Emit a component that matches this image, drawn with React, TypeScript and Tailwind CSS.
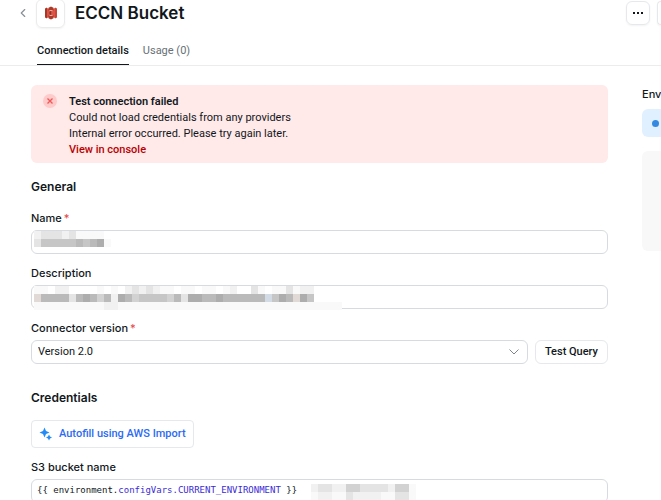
import { useState } from 'react'
import { ChevronLeft } from 'lucide-react'

type Tab = 'details' | 'usage'

interface RedactedProps {
  rows: string[]
  className?: string
}

const SHADES: Record<string, string> = {
  '0': 'bg-transparent',
  '1': 'bg-[#f9f9f9]',
  '2': 'bg-[#f1f1f1]',
  '3': 'bg-[#e4e4e4]',
  '4': 'bg-[#d2d2d2]',
  '5': 'bg-[#c6c6c6]',
  '6': 'bg-[#bababa]',
  '7': 'bg-[#adadad]',
  p: 'bg-[#e0d9d5]',
  b: 'bg-[#d3dce6]',
}

// Private values are covered by a mosaic, one character per cell
function Redacted({ rows, className = '' }: RedactedProps) {
  return (
    <div aria-hidden="true" className={`pointer-events-none absolute ${className}`}>
      {rows.map((row, y) => (
        <div key={y} className="flex">
          {row.split('').map((shade, x) => (
            <span key={x} className={`h-2 w-[7px] ${SHADES[shade]}`} />
          ))}
        </div>
      ))}
    </div>
  )
}

function BucketLogo() {
  return (
    <svg className="h-[14px] w-[14px]" viewBox="0 0 14 14" aria-hidden="true">
      <path d="M1 2.5 3 1.5v11L1 11.5z" fill="#a33a29" />
      <path d="M3 2 5.5 3v8L3 12z" fill="#e05243" />
      <path d="M13 2.5 11 1.5v11l2-1z" fill="#c94636" />
      <path d="M11 2 8.5 3v8l2.5 1z" fill="#e05243" />
      <path d="M7 .5 4.5 1.7v3L7 4l2.5.7v-3z" fill="#a83a29" />
      <path d="M7 13.5l-2.5-1.2v-3L7 10l2.5-.7v3z" fill="#a83a29" />
      <path d="M5 4.5h4v5H5z" fill="#e8705f" />
      <path d="M7 5 5.3 5.5v3L7 9z" fill="#8c3123" />
      <path d="M7 5l1.7.5v3L7 9z" fill="#d04a3a" />
    </svg>
  )
}

function Sparkles() {
  return (
    <svg className="h-[14px] w-[14px]" viewBox="0 0 14 14" fill="#228bf6" aria-hidden="true">
      <path d="M5.5.5 7 4 10.5 5.5 7 7 5.5 10.5 4 7 .5 5.5 4 4z" />
      <path d="M10 7.5l1 2 2 1-2 1-1 2-1-2-2-1 2-1z" />
    </svg>
  )
}

function Required() {
  return <span className="ml-0.5 text-[#e5484d]">*</span>
}

export default function App() {
  const [tab, setTab] = useState<Tab>('details')

  return (
    <div className="overflow-hidden bg-white font-['Inter',sans-serif] text-[11px] leading-4 text-[#11181c]">
      <header className="border-b border-[#ececec]">
        <div className="flex h-[26px] items-center pl-4">
          <button type="button" aria-label="Back" className="text-[#889096]">
            <ChevronLeft className="h-[14px] w-[14px]" />
          </button>
          <div className="ml-1.5 flex h-[29px] w-[29px] shrink-0 items-center justify-center rounded-md border border-[#ebebeb] shadow-xs">
            <BucketLogo />
          </div>
          <h1 className="ml-2.5 text-[17px] leading-6 font-semibold">ECCN Bucket</h1>
          <button
            type="button"
            aria-label="More"
            className="ml-auto flex h-6 w-6 shrink-0 items-center justify-center gap-0.5 rounded-md border border-[#e6e8eb] shadow-xs"
          >
            <span className="h-0.5 w-0.5 bg-[#11181c]" />
            <span className="h-0.5 w-0.5 bg-[#11181c]" />
            <span className="h-0.5 w-0.5 bg-[#11181c]" />
          </button>
          <button
            type="button"
            aria-label="Save"
            className="ml-[7px] h-6 w-1 shrink-0 rounded-l-md border border-r-0 border-[#e6e8eb] shadow-xs"
          />
        </div>
        <nav className="mt-3.5 flex gap-3.5 pl-[37px] font-['Roboto',sans-serif]">
          <button
            type="button"
            onClick={() => setTab('details')}
            className={`h-[25px] border-b pb-0.5 font-medium ${tab === 'details' ? 'border-[#11181c]' : 'border-transparent text-[#687076]'}`}
          >
            Connection details
          </button>
          <button
            type="button"
            onClick={() => setTab('usage')}
            className={`h-[25px] border-b pb-0.5 ${tab === 'usage' ? 'border-[#11181c]' : 'border-transparent text-[#687076]'}`}
          >
            Usage (0)
          </button>
        </nav>
      </header>

      <div className="flex gap-[34px] pl-[31px]">
        <main className="min-w-0 flex-1 pt-[19px]">
          <div
            role="alert"
            className="flex gap-3 rounded-md bg-[#ffe9e9] px-3 pt-[9px] pb-[5px] font-['Roboto',sans-serif]"
          >
            <span className="flex h-[14px] w-[14px] shrink-0 items-center justify-center rounded-full bg-[#ffcaca]">
              <svg className="h-1.5 w-1.5" viewBox="0 0 6 6" stroke="#ee5a5a" strokeWidth="1.4" aria-hidden="true">
                <path d="M.5.5l5 5M5.5.5l-5 5" />
              </svg>
            </span>
            <div>
              <p className="font-semibold">Test connection failed</p>
              <p>Could not load credentials from any providers</p>
              <p>Internal error occurred. Please try again later.</p>
              <a href="#console" className="font-medium text-[#b80000]">View in console</a>
            </div>
          </div>

          <h2 className="mt-4 text-xs leading-4 font-semibold">General</h2>

          <label htmlFor="name" className="mt-[15px] block font-medium">
            Name<Required />
          </label>
          <div className="relative mt-1">
            <input id="name" className="block h-6 w-full rounded-md border border-[#d7dbdf] px-1.5" />
            <Redacted className="top-px left-[3px]" rows={['23332311110', '35555565671']} />
          </div>

          <label htmlFor="description" className="mt-[11px] block font-medium">Description</label>
          <div className="relative mt-1">
            <input id="description" className="block h-6 w-full rounded-md border border-[#d7dbdf] px-1.5" />
            <Redacted
              className="top-px left-[3px]"
              rows={[
                '1102200001010232321101101101200310113122',
                'p66663676462764555546377667666666b576p75',
                '11111111112211111111111111111111111111111111',
              ]}
            />
          </div>

          <label htmlFor="version" className="mt-[11px] block font-medium">
            Connector version<Required />
          </label>
          <div className="mt-1 flex gap-[7px] font-['Roboto',sans-serif]">
            <div className="relative flex-1">
              <select
                id="version"
                className="block h-6 w-full appearance-none rounded-md border border-[#d7dbdf] px-1.5"
              >
                <option>Version 2.0</option>
              </select>
              <svg
                className="pointer-events-none absolute top-[9px] right-[9px] h-1.5 w-2.5"
                viewBox="0 0 10 6"
                fill="none"
                stroke="#7e868c"
                aria-hidden="true"
              >
                <path d="M.5.5 5 5 9.5.5" />
              </svg>
            </div>
            <button type="button" className="h-6 rounded-md border border-[#e6e8eb] px-[9px] font-medium">
              Test Query
            </button>
          </div>

          <h2 className="mt-[26px] text-xs leading-4 font-semibold">Credentials</h2>

          <button
            type="button"
            className="mt-3.5 flex h-7 items-center gap-1.5 rounded-sm border border-[#e6e8eb] px-[7px] font-['Roboto',sans-serif] font-medium text-[#2b6bf3]"
          >
            <Sparkles />
            Autofill using AWS Import
          </button>

          <h3 className="mt-[11px] font-medium">S3 bucket name</h3>
          <div className="relative mt-1 h-6 rounded-md border border-[#d7dbdf] px-[5px] font-['DejaVu_Sans_Mono',monospace] text-[9px] leading-5 whitespace-nowrap">
            {'{{ '}environment.<span className="text-[#3b2bd6]">configVars.CURRENT_ENVIRONMENT</span>{' }}'}
            <Redacted className="top-1 left-[279px]" rows={['233224433332441', '122113222211331']} />
          </div>
        </main>

        <aside className="w-[19px] shrink-0 pt-5">
          <h2 className="font-medium">Env</h2>
          <div className="mt-[7px] flex h-7 items-center rounded-l-md bg-[#e1f0ff] pl-2.5">
            <span className="h-[7px] w-[7px] shrink-0 rounded-full bg-[#3488e0]" />
          </div>
          <div className="mt-3.5 h-[100px] rounded-l-md bg-[#f8f8f8]" />
        </aside>
      </div>
    </div>
  )
}
